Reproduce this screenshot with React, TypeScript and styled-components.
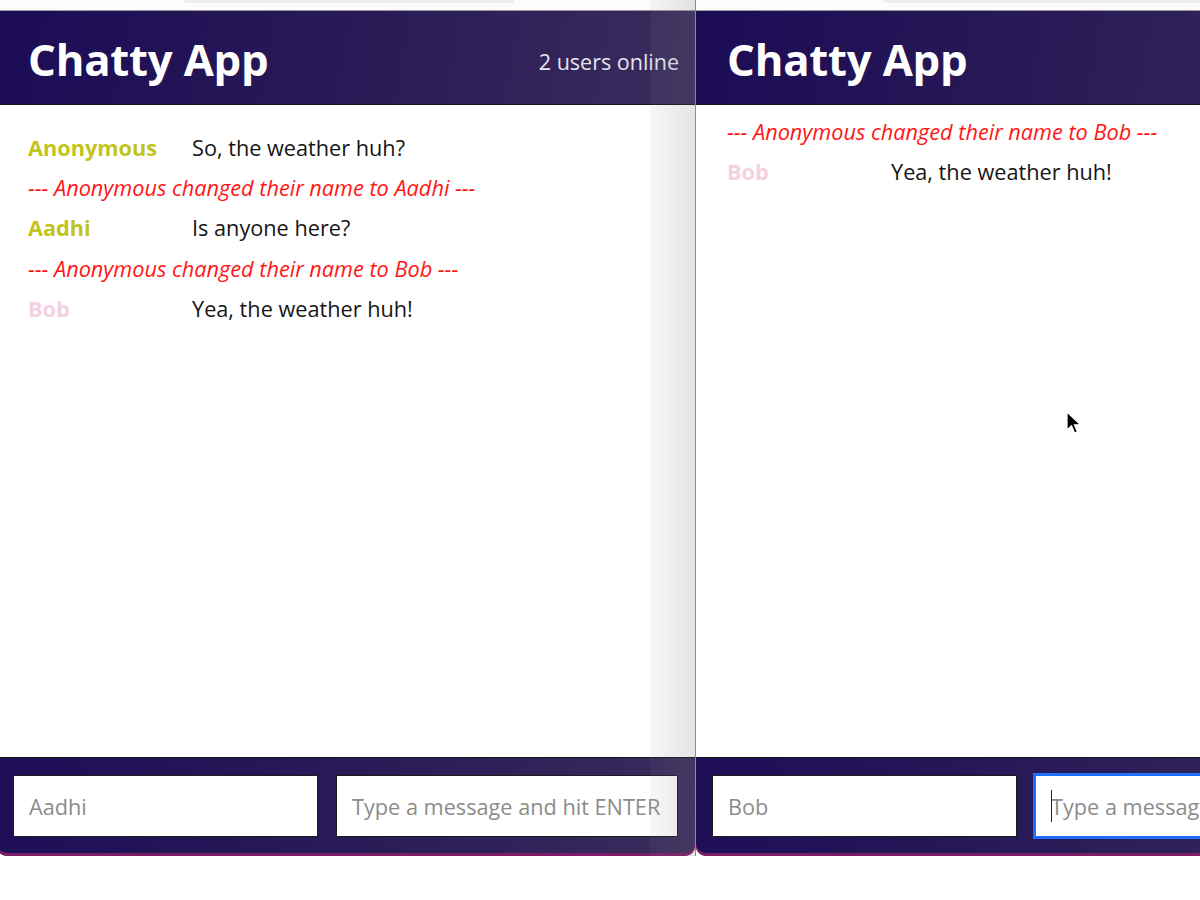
import React from 'react';
import styled, { createGlobalStyle } from 'styled-components';

type Message = {
  type: 'message' | 'notification';
  username?: string;
  content: string;
  color?: string;
};

type ChatWindowProps = {
  width: number;
  offset?: number;
  addressBar: [number, number];
  showCount?: boolean;
  listTop: number;
  messages: Message[];
  username: string;
  focused?: boolean;
  shaded?: boolean;
};

const GlobalStyle = createGlobalStyle`
  html, body {
    margin: 0;
    padding: 0;
    background: #ffffff;
  }

  body {
    font-family: 'Open Sans', 'Liberation Sans', sans-serif;
  }
`;

const Desktop = styled.div`
  position: relative;
  display: flex;
  width: 1200px;
  height: 900px;
  overflow: hidden;
  background: #ffffff;
`;

const Window = styled.div<{ $width: number; $offset: number }>`
  position: relative;
  display: flex;
  flex-direction: column;
  flex: 0 0 ${(p) => p.$width}px;
  margin-left: ${(p) => p.$offset}px;
  height: 856px;
  border-right: 1px solid #8c8c8c;
`;

const Chrome = styled.div`
  height: 10px;
  background: #fcfcfd;
  border-bottom: 1px solid #9a9a9e;
`;

const AddressBar = styled.div<{ $left: number; $width: number }>`
  margin-left: ${(p) => p.$left}px;
  width: ${(p) => p.$width}px;
  height: 3px;
  background: #ececf1;
  border-radius: 0 0 3px 3px;
`;

const Navbar = styled.nav`
  display: flex;
  align-items: center;
  justify-content: space-between;
  height: 93px;
  padding: 0 16px 0 31px;
  background: linear-gradient(100deg, #1c0c56 0%, #231456 30%, #2b1d57 60%, #3a2d5c 100%);
  border-bottom: 1px solid #141414;
`;

const Brand = styled.h1`
  margin: 2px 0 0;
  color: #ffffff;
  font-size: 43.7px;
  font-weight: 700;
  letter-spacing: -0.2px;
`;

const UserCount = styled.span`
  margin-top: 8px;
  color: #e6e3ee;
  font-size: 21.5px;
`;

const MessageList = styled.main<{ $top: number }>`
  flex: 1;
  display: flex;
  flex-direction: column;
  padding: ${(p) => p.$top}px 31px 0;
  background: #ffffff;
`;

const Row = styled.div`
  display: flex;
  align-items: center;
  height: 40.3px;
  font-size: 21.7px;
`;

const Username = styled.span<{ $color: string }>`
  flex: 0 0 164px;
  color: ${(p) => p.$color};
  font-weight: 700;
`;

const Content = styled.span`
  color: #151515;
`;

const Notification = styled.span`
  color: #ff1616;
  font-style: italic;
`;

const ChatBar = styled.footer`
  display: flex;
  gap: 18px;
  height: 81px;
  padding: 17px 17px 0 16px;
  background: linear-gradient(100deg, #1e0e57 0%, #251657 35%, #2d1f58 65%, #3a2c5c 100%);
  border-top: 1px solid #141414;
  border-radius: 0 0 10px 10px;
  box-shadow: inset 0 -3px 0 #7a1d66;
`;

const Field = styled.div<{ $grow?: boolean }>`
  position: relative;
  flex: ${(p) => (p.$grow ? '1 1 auto' : '0 0 305px')};
  height: 62px;
`;

const Input = styled.input<{ $focused?: boolean }>`
  box-sizing: border-box;
  width: 100%;
  height: 100%;
  padding: 0 15px;
  border: 1px solid ${(p) => (p.$focused ? '#1f6fff' : '#1c1c1c')};
  box-shadow: ${(p) => (p.$focused ? '0 0 0 2px #1f6fff' : 'none')};
  outline: none;
  background: #ffffff;
  font-family: 'Open Sans', 'Liberation Sans', sans-serif;
  font-size: 21.7px;
  color: #222;

  &::placeholder {
    color: #8c8c8c;
  }
`;

const Caret = styled.span`
  position: absolute;
  left: 16px;
  top: 15px;
  width: 1px;
  height: 32px;
  background: #222;
`;

const Shade = styled.div`
  position: absolute;
  top: 0;
  right: 0;
  bottom: 0;
  width: 45px;
  background: linear-gradient(90deg, rgba(150, 150, 160, 0.07), rgba(110, 110, 120, 0.19));
  pointer-events: none;
`;

const Pointer = styled.svg`
  position: absolute;
  left: 1066px;
  top: 411px;
`;

const ChatWindow = ({
  width,
  offset = 0,
  addressBar,
  showCount,
  listTop,
  messages,
  username,
  focused,
  shaded,
}: ChatWindowProps) => (
  <Window $width={width} $offset={offset}>
    <Chrome>
      <AddressBar $left={addressBar[0]} $width={addressBar[1]} />
    </Chrome>
    <Navbar>
      <Brand>Chatty App</Brand>
      {showCount && <UserCount>2 users online</UserCount>}
    </Navbar>
    <MessageList $top={listTop}>
      {messages.map((m, i) =>
        m.type === 'notification' ? (
          <Row key={i}>
            <Notification>{m.content}</Notification>
          </Row>
        ) : (
          <Row key={i}>
            <Username $color={m.color || '#c2c41c'}>{m.username}</Username>
            <Content>{m.content}</Content>
          </Row>
        ),
      )}
    </MessageList>
    <ChatBar>
      <Field>
        <Input placeholder={username} readOnly />
      </Field>
      <Field $grow>
        <Input placeholder="Type a message and hit ENTER" $focused={focused} readOnly />
        {focused && <Caret />}
      </Field>
    </ChatBar>
    {shaded && <Shade />}
  </Window>
);

const leftMessages: Message[] = [
  { type: 'message', username: 'Anonymous', content: 'So, the weather huh?' },
  { type: 'notification', content: '--- Anonymous changed their name to Aadhi ---' },
  { type: 'message', username: 'Aadhi', content: 'Is anyone here?' },
  { type: 'notification', content: '--- Anonymous changed their name to Bob ---' },
  { type: 'message', username: 'Bob', content: 'Yea, the weather huh!', color: '#f3d0e2' },
];

const rightMessages: Message[] = [
  { type: 'notification', content: '--- Anonymous changed their name to Bob ---' },
  { type: 'message', username: 'Bob', content: 'Yea, the weather huh!', color: '#f3d0e2' },
];

export default function App() {
  return (
    <>
      <GlobalStyle />
      <Desktop>
        <ChatWindow
          width={698}
          offset={-3}
          addressBar={[187, 330]}
          showCount
          listTop={22}
          messages={leftMessages}
          username="Aadhi"
          shaded
        />
        <ChatWindow
          width={640}
          addressBar={[188, 500]}
          listTop={6}
          messages={rightMessages}
          username="Bob"
          focused
        />
        <Pointer width="16" height="26" viewBox="0 0 16 26">
          <path d="M1 1 L1 19 L5.5 14.8 L8.6 22 L11.4 20.8 L8.4 13.8 L14.5 13.8 Z" fill="#000" stroke="#fff" strokeWidth="1.2" />
        </Pointer>
      </Desktop>
    </>
  );
}
